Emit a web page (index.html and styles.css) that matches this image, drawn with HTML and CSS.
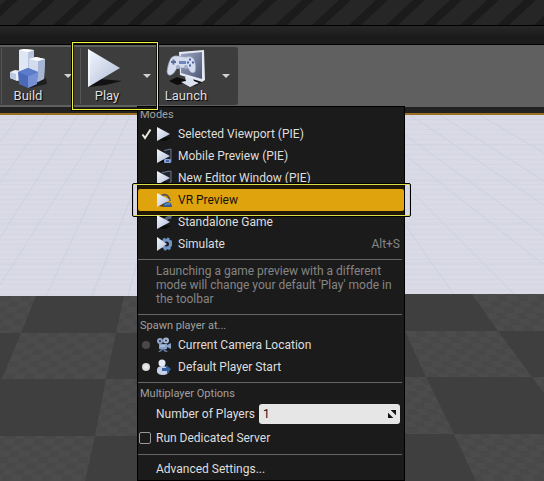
FILE: index.html
```html
<!DOCTYPE html>
<html lang="en">
<head>
<meta charset="utf-8">
<title>Level Editor</title>
<link rel="stylesheet" href="styles.css">
</head>
<body>
<svg class="defs" aria-hidden="true">
  <defs>
    <linearGradient id="ice" x1="0" y1="0" x2="1" y2="1">
      <stop offset="0" stop-color="#f4f8ff"/><stop offset="1" stop-color="#aebbd6"/>
    </linearGradient>
    <linearGradient id="screen" x1="0" y1="0" x2="1" y2="1">
      <stop offset="0" stop-color="#9aa6c2"/><stop offset="1" stop-color="#4d5876"/>
    </linearGradient>
    <symbol id="mini-play" viewBox="0 0 16 16">
      <path d="M2 14 8 11l7 1-6 3z" fill="#000" opacity=".6"/>
      <path d="M1 1v14l13-7z" fill="url(#ice)"/>
    </symbol>
  </defs>
</svg>

<header class="titlebar">
  <svg class="stripes" aria-hidden="true">
    <defs>
      <pattern id="hazard" width="37" height="25" patternUnits="userSpaceOnUse">
        <path d="M16 25h12L55 0H43zM-21 25h12L18 0H6z" fill="#1b1b1b"/>
      </pattern>
    </defs>
    <rect width="100%" height="25" fill="url(#hazard)"/>
  </svg>
</header>
<div class="menubar"></div>

<nav class="toolbar" aria-label="Level toolbar">
  <div class="tools">
    <div class="tool">
      <button class="tool-main" type="button">
        <svg class="tool-icon" viewBox="0 0 40 40" aria-hidden="true">
          <path d="M4 31 20 38 38 30 39 36 22 40z" fill="#000" opacity=".5"/>
          <path d="M11 2 16 1l10 1v28l-15-2z" fill="#dfe6f4"/>
          <path d="M20 4l6-2v26l-6 2z" fill="#b9c5dd"/><path d="M11 2 16 1l10 1-6 2z" fill="#fff"/>
          <path d="M21 11l7-2 9 2-1 19-7 4-8-4z" fill="#d3dcef"/>
          <path d="M30 13l7-2-1 20-6 3z" fill="#a7b5d4"/><path d="M21 11l7-2 9 2-7 2z" fill="#fafcff"/>
          <path d="M2 24l5-2 7 1v9l-5 1-7-3z" fill="#e9eef8"/><path d="M2 24l6 2v6l-6-2z" fill="#bcc8df"/>
          <path d="M10 24l10-4 10 4-1 12-9 4-9-4z" fill="#4a69b8"/>
          <path d="M20 28l10-4-1 12-9 4z" fill="#7690d6"/><path d="M10 24l10-4 10 4-10 4z" fill="#5b7cca"/>
        </svg>
        <span>Build</span>
      </button>
      <button class="tool-drop" type="button" aria-label="Build options"></button>
    </div>

    <div class="tool">
      <button class="tool-main" type="button">
        <svg class="tool-icon" viewBox="0 0 40 40" aria-hidden="true">
          <path d="M2 39 14 31l21 2-16 4z" fill="#080808" opacity=".8"/>
          <path d="M1 1v38l32-19z" fill="url(#ice)"/>
          <path d="M1 1v38l2-2V3z" fill="#fff" opacity=".6"/>
        </svg>
        <span>Play</span>
      </button>
      <button class="tool-drop" type="button" aria-label="Play options" aria-expanded="true"></button>
      <div class="tool-ring"></div>

      <form class="menu">
        <h2>Modes</h2>
        <button class="item" type="button">
          <svg class="tick" viewBox="0 0 12 12" aria-hidden="true"><path d="M1.500 6.500 4 10 9.500 1.500" fill="none" stroke="#e8e8dc" stroke-width="2"/></svg>
          <svg class="icon" viewBox="0 0 16 16" aria-hidden="true"><use href="#mini-play"/></svg>
          <span>Selected Viewport (PIE)</span>
        </button>
        <button class="item" type="button">
          <svg class="icon" viewBox="0 0 16 16" aria-hidden="true"><path d="M8 2.500 15 1v13H8" fill="#20242c" stroke="#6c788e"/><use href="#mini-play"/><rect x="8" y="11" width="7" height="4" rx="1" fill="#7f9fd8"/><path d="M10 13h3" stroke="#20304c"/></svg>
          <span>Mobile Preview (PIE)</span>
        </button>
        <button class="item" type="button">
          <svg class="icon" viewBox="0 0 16 16" aria-hidden="true"><path d="M6 2.500 15 1v11l-6 2" fill="#20242c" stroke="#6c788e"/><use href="#mini-play"/></svg>
          <span>New Editor Window (PIE)</span>
        </button>
        <button class="item selected" type="button">
          <svg class="icon" viewBox="0 0 16 16" aria-hidden="true"><path d="M5 4q7-4 9 5" fill="none" stroke="#5b574c" stroke-width="2"/><use href="#mini-play"/><path d="M7 15q-1-4 4-5 5 0 5 5z" fill="#365b93"/><path d="M9 13q2-2 5-1" stroke="#82a8dc" fill="none"/></svg>
          <span>VR Preview</span>
        </button>
        <button class="item" type="button">
          <svg class="icon" viewBox="0 0 16 16" aria-hidden="true"><path d="M8 5q3-4 8-3l-1 3q-3-1-5 3z" fill="#56657e"/><use href="#mini-play"/></svg>
          <span>Standalone Game</span>
        </button>
        <button class="item" type="button">
          <svg class="icon" viewBox="0 0 16 16" aria-hidden="true"><circle cx="10.500" cy="8" r="4" fill="none" stroke="#6f94c4" stroke-width="3"/><circle cx="10.500" cy="8" r="5.500" fill="none" stroke="#6f94c4" stroke-width="2" stroke-dasharray="2.200 2.120"/><path d="M1 1v14l10-7z" fill="url(#ice)"/></svg>
          <span>Simulate</span>
          <kbd>Alt+S</kbd>
        </button>
        <hr>
        <p>Launching a game preview with a different mode will change your default 'Play' mode in the toolbar</p>
        <hr>
        <h2>Spawn player at...</h2>
        <label class="item">
          <input class="radio" type="radio" name="spawn">
          <svg class="icon" viewBox="0 0 16 16" aria-hidden="true"><circle cx="4" cy="4" r="3" fill="#8ea5c8"/><circle cx="10" cy="3.500" r="3" fill="#a9bbd8"/><circle cx="4" cy="4" r="1" fill="#24364f"/><circle cx="10" cy="3.500" r="1" fill="#24364f"/><path d="M3 7h8v1l4-2v6l-4-2v2H3z" fill="#86a0c8"/><path d="M5 12h4l3 3H9l-2-2-3 2H2z" fill="#5d7395"/><path d="M4 9h5" stroke="#cbd8ec"/></svg>
          <span>Current Camera Location</span>
        </label>
        <label class="item">
          <input class="radio" type="radio" name="spawn" checked>
          <svg class="icon" viewBox="0 0 16 16" aria-hidden="true"><path d="M1 13q-1-6 5-6t7 5q-1 4-6 4-5 0-6-3z" fill="#c4d1e8"/><circle cx="6" cy="4" r="3.500" fill="#e3eaf6"/><path d="M6 9h4V6l5 4-4 5v-3H6z" fill="#345d9e"/></svg>
          <span>Default Player Start</span>
        </label>
        <hr>
        <h2>Multiplayer Options</h2>
        <div class="field">
          <label for="players">Number of Players</label>
          <div class="spin">
            <input id="players" type="text" value="1">
            <svg viewBox="0 0 9 9" aria-hidden="true"><path d="M3 0h6v6zM0 3v6h6z" fill="#111"/></svg>
          </div>
        </div>
        <label class="check"><input type="checkbox"><span>Run Dedicated Server</span></label>
        <hr>
        <button class="item" type="button"><span>Advanced Settings...</span></button>
      </form>
    </div>

    <div class="tool">
      <button class="tool-main" type="button">
        <svg class="tool-icon" viewBox="0 0 40 40" aria-hidden="true">
          <path d="M3 33l8-4 9 3 16-1 2 2-9 5-10-3-8 2z" fill="#050505" opacity=".85"/>
          <path d="M19 29l7-1 2 5 5 2-9 4-9-5 5-1z" fill="#dce3f0"/>
          <path d="M13 4 38 2l1 30-3 2-22-7z" fill="#e4e9f4"/>
          <path d="M15 6 36 4v27l-21-6z" fill="url(#screen)"/>
          <path d="M5 10q3-3 7-2l8 1q5-2 8 2 3 8 1 13-4 3-7-4H11q-3 6-6 7-4 1-4-4 1-8 4-13z" fill="#d5dced" stroke="#8793b0" stroke-width=".6"/>
          <path d="M5 14h5M7.500 11.500v5" stroke="#5a6f9c" stroke-width="2"/>
          <path d="M13 13h7v3h-7z" fill="#6c86c0"/>
          <path d="M24 10.500v2M24 16.500v2M21 14.500h2M26 14.500h2" stroke="#4a66a8" stroke-width="2"/>
          <circle cx="12" cy="19" r="2" fill="#a2afcb"/><circle cx="20" cy="19" r="2" fill="#a2afcb"/>
        </svg>
        <span>Launch</span>
      </button>
      <button class="tool-drop" type="button" aria-label="Launch options"></button>
    </div>
  </div>
</nav>

<main class="viewport">
  <svg class="scene" viewBox="0 0 544 366" preserveAspectRatio="none" aria-hidden="true">
    <defs>
      <pattern id="tiles" width="20" height="12" patternUnits="userSpaceOnUse" patternTransform="skewX(-18)">
        <rect width="20" height="12" fill="#4c4c4c"/><path d="M0 0h10v6H0zM10 6h10v6H10z" fill="#484848"/>
      </pattern>
      <pattern id="tiles-right" width="20" height="12" patternUnits="userSpaceOnUse" patternTransform="skewX(28)">
        <rect width="20" height="12" fill="#4c4c4c"/><path d="M0 0h10v6H0zM10 6h10v6H10z" fill="#484848"/>
      </pattern>
      <pattern id="rows" width="6" height="5" patternUnits="userSpaceOnUse">
        <path d="M0 4.500h6" stroke="#d2d3e2" stroke-width=".6"/>
      </pattern>
    </defs>
    <rect width="544" height="182" fill="#dadae7"/>
    <rect width="544" height="182" fill="url(#rows)"/>
    <g stroke="#c9cbdc" stroke-width=".7">
      <path d="M20 0-24 60M48 0-30 110M78 0-30 170M108 0 0 170M130 0 46 181M148 40 92 181M160 60 128 181"/>
      <path d="M410 0 544 90M440 0 544 66M480 0 544 38M405 40 544 150M405 70 516 181M405 110 455 181M405 20 544 120"/>
      <path d="M0 30h544M0 66h544M0 108h544M0 148h544" stroke="#d0d1e0"/>
    </g>
    <path d="M0 181h270v-2h274v187H0z" fill="#3f3f3f"/>
    <g fill="url(#tiles)">
      <path d="M0 181h36L21 218H0z"/><path d="M124 181h146v37H116z"/>
      <path d="M21 218h95l-10 46H2z"/><path d="M106 264h164v57H95z"/>
      <path d="M0 321h95l-10 45H0z"/>
    </g>
    <g fill="url(#tiles-right)">
      <path d="M472 179h72v37h-46z"/><path d="M405 216h93l34 46H426z"/>
      <path d="M270 262h156l28 57H270z"/><path d="M532 262h12v16z"/>
      <path d="M454 319h90v47h-68z"/>
    </g>
    <ellipse cx="219" cy="366" rx="36" ry="2" fill="#e4e0da"/>
  </svg>
</main>
</body>
</html>
```
FILE: styles.css
```css
* { box-sizing: border-box; }

body {
  margin: 0;
  min-height: 100vh;
  display: flex;
  flex-direction: column;
  overflow: hidden;
  background: #3f3f3f;
  color: #dedede;
  font: 12px/14px Roboto, "Liberation Sans", sans-serif;
}

button, input { font: inherit; color: inherit; }

button {
  padding: 0;
  border: 0;
  background: none;
}

.defs {
  position: absolute;
  width: 0;
  height: 0;
}

.titlebar {
  height: 26px;
  background: #262626;
  border-bottom: 1px solid #000;
}

.stripes {
  display: block;
  width: 100%;
  height: 25px;
}

.menubar {
  height: 19px;
  background: linear-gradient(#272727, #1b1b1b 60%);
  border-bottom: 1px solid #000;
}

.toolbar {
  padding: 2px 0;
  background: #606060;
}

.tools {
  display: flex;
  width: max-content;
  padding-left: 1px;
  background: #3d3d3d;
  border-radius: 0 3px 3px 0;
}

.tool {
  position: relative;
  display: flex;
  width: 79px;
  height: 58px;
}

.tool::before {
  content: "";
  position: absolute;
  inset: 1px auto 1px 0;
  width: 1px;
  background: #555;
}

.tool:last-child::before { display: none; }

.tool-main {
  display: flex;
  flex-direction: column;
  align-items: center;
  width: 54px;
  padding-top: 1px;
  font-size: 13px;
  line-height: 16px;
  text-shadow: 1px 1px 1px #000;
}

.tool-icon {
  width: 40px;
  height: 40px;
}

.tool-drop {
  display: grid;
  place-items: center;
  width: 25px;
}

.tool-drop::before {
  content: "";
  border: 4px solid transparent;
  border-top-color: #d0d0d0;
  border-bottom: 0;
}

.tool-ring {
  position: absolute;
  z-index: 2;
  inset: -6px 0 -6px -9px;
  border: 1px solid #000;
  box-shadow: inset 0 0 0 1px #f2f23c, inset 0 0 0 2px #15150a;
  pointer-events: none;
}

.menu {
  position: absolute;
  z-index: 1;
  top: 59px;
  left: 57px;
  width: 268px;
  border: 1px solid #000;
  background: #1b1b1b;
}

.menu h2 {
  margin: 0;
  padding-left: 2px;
  color: #a0a0a0;
  font-size: 11px;
  font-weight: 400;
  line-height: 16px;
}

.menu hr {
  height: 1px;
  margin: 4px 2px 3px 0;
  border: 0;
  background: #666;
}

.menu p {
  margin: 0;
  padding: 1px 6px 4px 18px;
  color: #858585;
}

.item {
  position: relative;
  display: flex;
  align-items: center;
  width: 100%;
  height: 22px;
  padding: 0 4px 0 18px;
  text-align: left;
}

.item kbd {
  margin-left: auto;
  color: #858585;
  font: inherit;
}

.icon {
  width: 16px;
  height: 16px;
  margin-right: 6px;
}

.tick {
  position: absolute;
  left: 3px;
  width: 12px;
  height: 12px;
}

.selected {
  background: #dfa30d;
  border-radius: 2px;
  box-shadow: 0 4px #211804, 0 -4px #211804;
  color: #16120a;
}

.selected::after {
  content: "";
  position: absolute;
  inset: -6px -7px -6px -6px;
  border: 1px solid #000;
  border-radius: 2px;
  box-shadow: inset 0 0 0 1px #d8dc4c;
}

.radio {
  appearance: none;
  position: absolute;
  left: 4px;
  width: 8px;
  height: 8px;
  margin: 0;
  border-radius: 50%;
  background: #4c4848;
}

.radio:checked { background: radial-gradient(#f4f4f4, #c4c4c4); }

.field {
  display: flex;
  align-items: center;
  height: 24px;
  padding: 0 4px 0 18px;
  gap: 4px;
  white-space: nowrap;
}

.spin {
  display: flex;
  flex: 1;
  align-items: center;
  min-width: 0;
  height: 20px;
  padding: 0 4px;
  border-radius: 3px;
  background: #e6e6e6;
  color: #111;
}

.spin input {
  flex: 1;
  min-width: 0;
  padding: 0;
  border: 0;
  outline: 0;
  background: none;
}

.spin svg {
  width: 8px;
  height: 8px;
}

.check {
  display: flex;
  align-items: center;
  height: 24px;
  padding-left: 1px;
  gap: 5px;
}

.check input {
  appearance: none;
  width: 12px;
  height: 12px;
  margin: 0;
  border: 1px solid #999;
  border-radius: 2px;
}

.viewport {
  display: flex;
  flex: 1;
  flex-direction: column;
  border-top: 6px solid #222;
}

.viewport::before {
  content: "";
  height: 2px;
  background: #9a7020;
}

.scene {
  display: block;
  flex: 1;
  width: 100%;
  min-height: 0;
}
```
